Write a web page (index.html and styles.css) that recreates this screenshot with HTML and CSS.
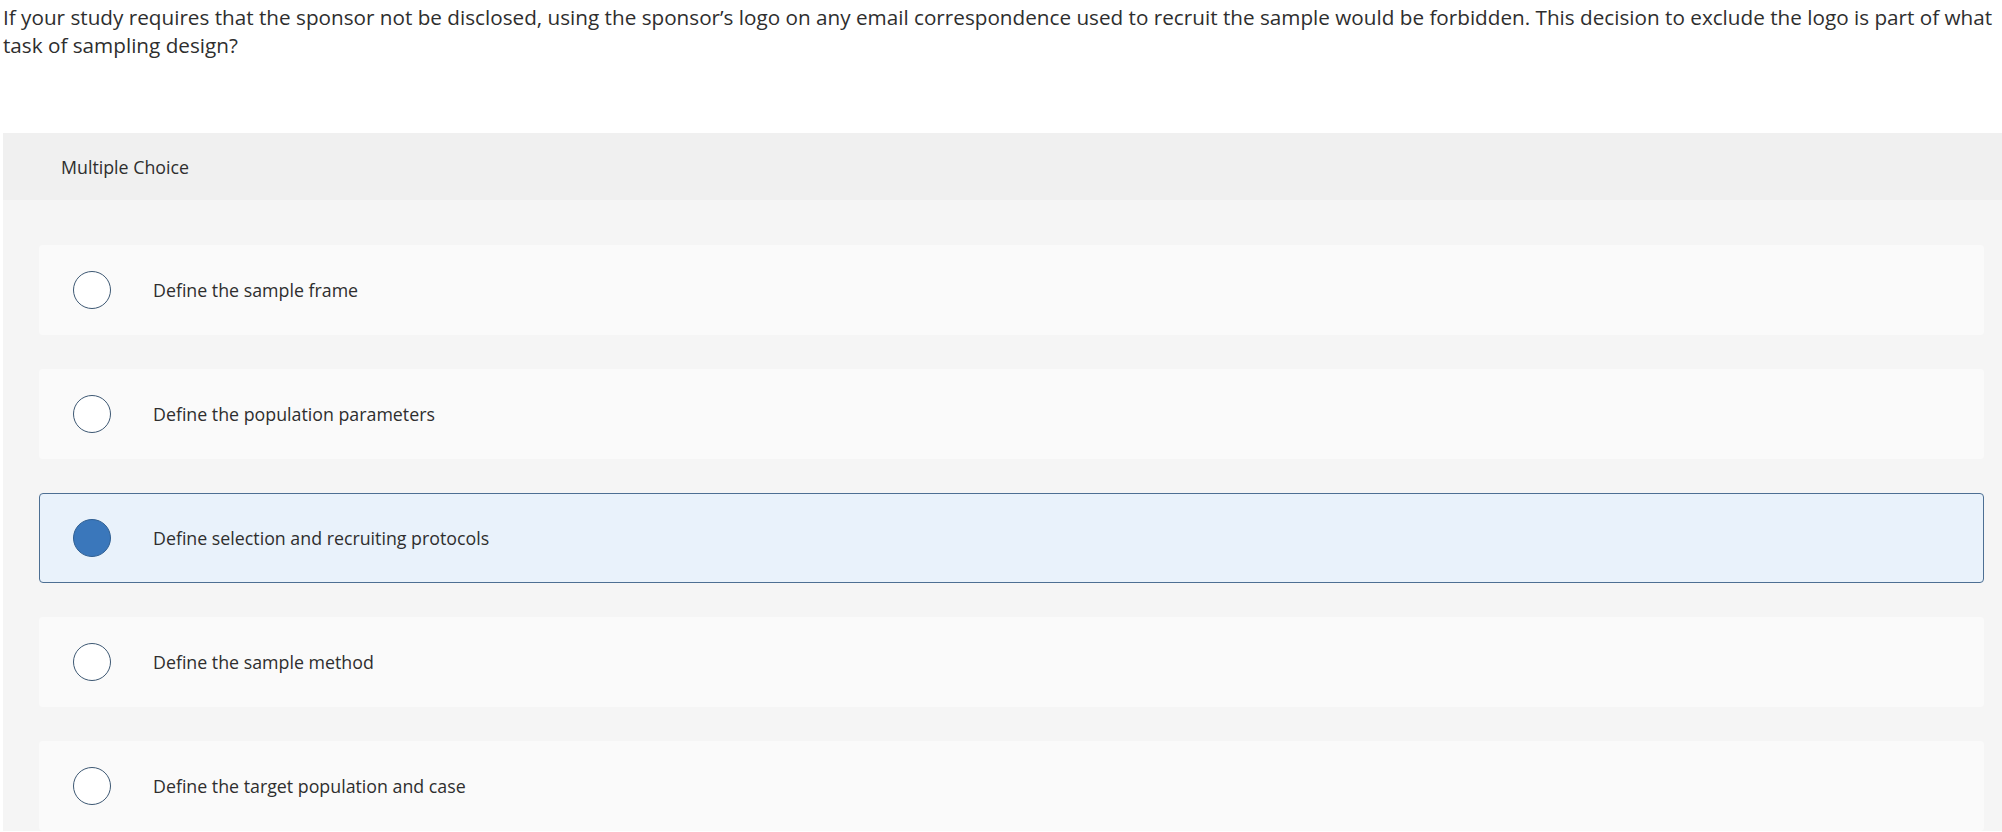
FILE: index.html
```html
<!DOCTYPE html>
<html lang="en">
<head>
    <meta charset="UTF-8">
    <meta name="viewport" content="width=device-width, initial-scale=1.0">
    <title>Multiple Choice Question</title>
    <link rel="stylesheet" href="styles.css">
</head>
<body>
    <p class="question">If your study requires that the sponsor not be disclosed, using the sponsor’s logo on any email correspondence used to recruit the sample would be forbidden. This decision to exclude the logo is part of what task of sampling design?</p>
    <section class="panel">
        <div class="panel-header">Multiple Choice</div>
        <div class="choices">
            <div class="choice"><span class="radio"></span><span class="label">Define the sample frame</span></div>
            <div class="choice"><span class="radio"></span><span class="label">Define the population parameters</span></div>
            <div class="choice selected"><span class="radio"></span><span class="label">Define selection and recruiting protocols</span></div>
            <div class="choice"><span class="radio"></span><span class="label">Define the sample method</span></div>
            <div class="choice"><span class="radio"></span><span class="label">Define the target population and case</span></div>
        </div>
    </section>
</body>
</html>
```

FILE: styles.css
```css
* {
    margin: 0;
    padding: 0;
    box-sizing: border-box;
}

body {
    font-family: "Open Sans", Lato, Arial, sans-serif;
    color: #2e2e2e;
    background: #ffffff;
    overflow: hidden;
}

.question {
    font-size: 20.7px;
    line-height: 28px;
    padding: 3px 0 0 3px;
    width: 2000px;
}

.panel {
    margin: 74px 0 0 3px;
    background: #f5f5f5;
}

.panel-header {
    height: 67px;
    display: flex;
    align-items: center;
    padding-left: 58px;
    background: #f0f0f0;
    font-size: 17.8px;
}

.choices {
    padding: 45px 18px 0 36px;
    display: flex;
    flex-direction: column;
    gap: 34px;
}

.choice {
    height: 90px;
    display: flex;
    align-items: center;
    padding-left: 33px;
    background: #fafafa;
    border: 1px solid transparent;
    border-radius: 4px;
    font-size: 17.8px;
}

.radio {
    width: 38px;
    height: 38px;
    border: 1.5px solid #3d5873;
    border-radius: 50%;
    background: #ffffff;
    flex-shrink: 0;
}

.label {
    margin-left: 42px;
}

.choice.selected {
    background: #e9f2fb;
    border-color: #4d6f93;
}

.choice.selected .radio {
    background: #3a77bb;
    border-color: #2f5f92;
}
```
